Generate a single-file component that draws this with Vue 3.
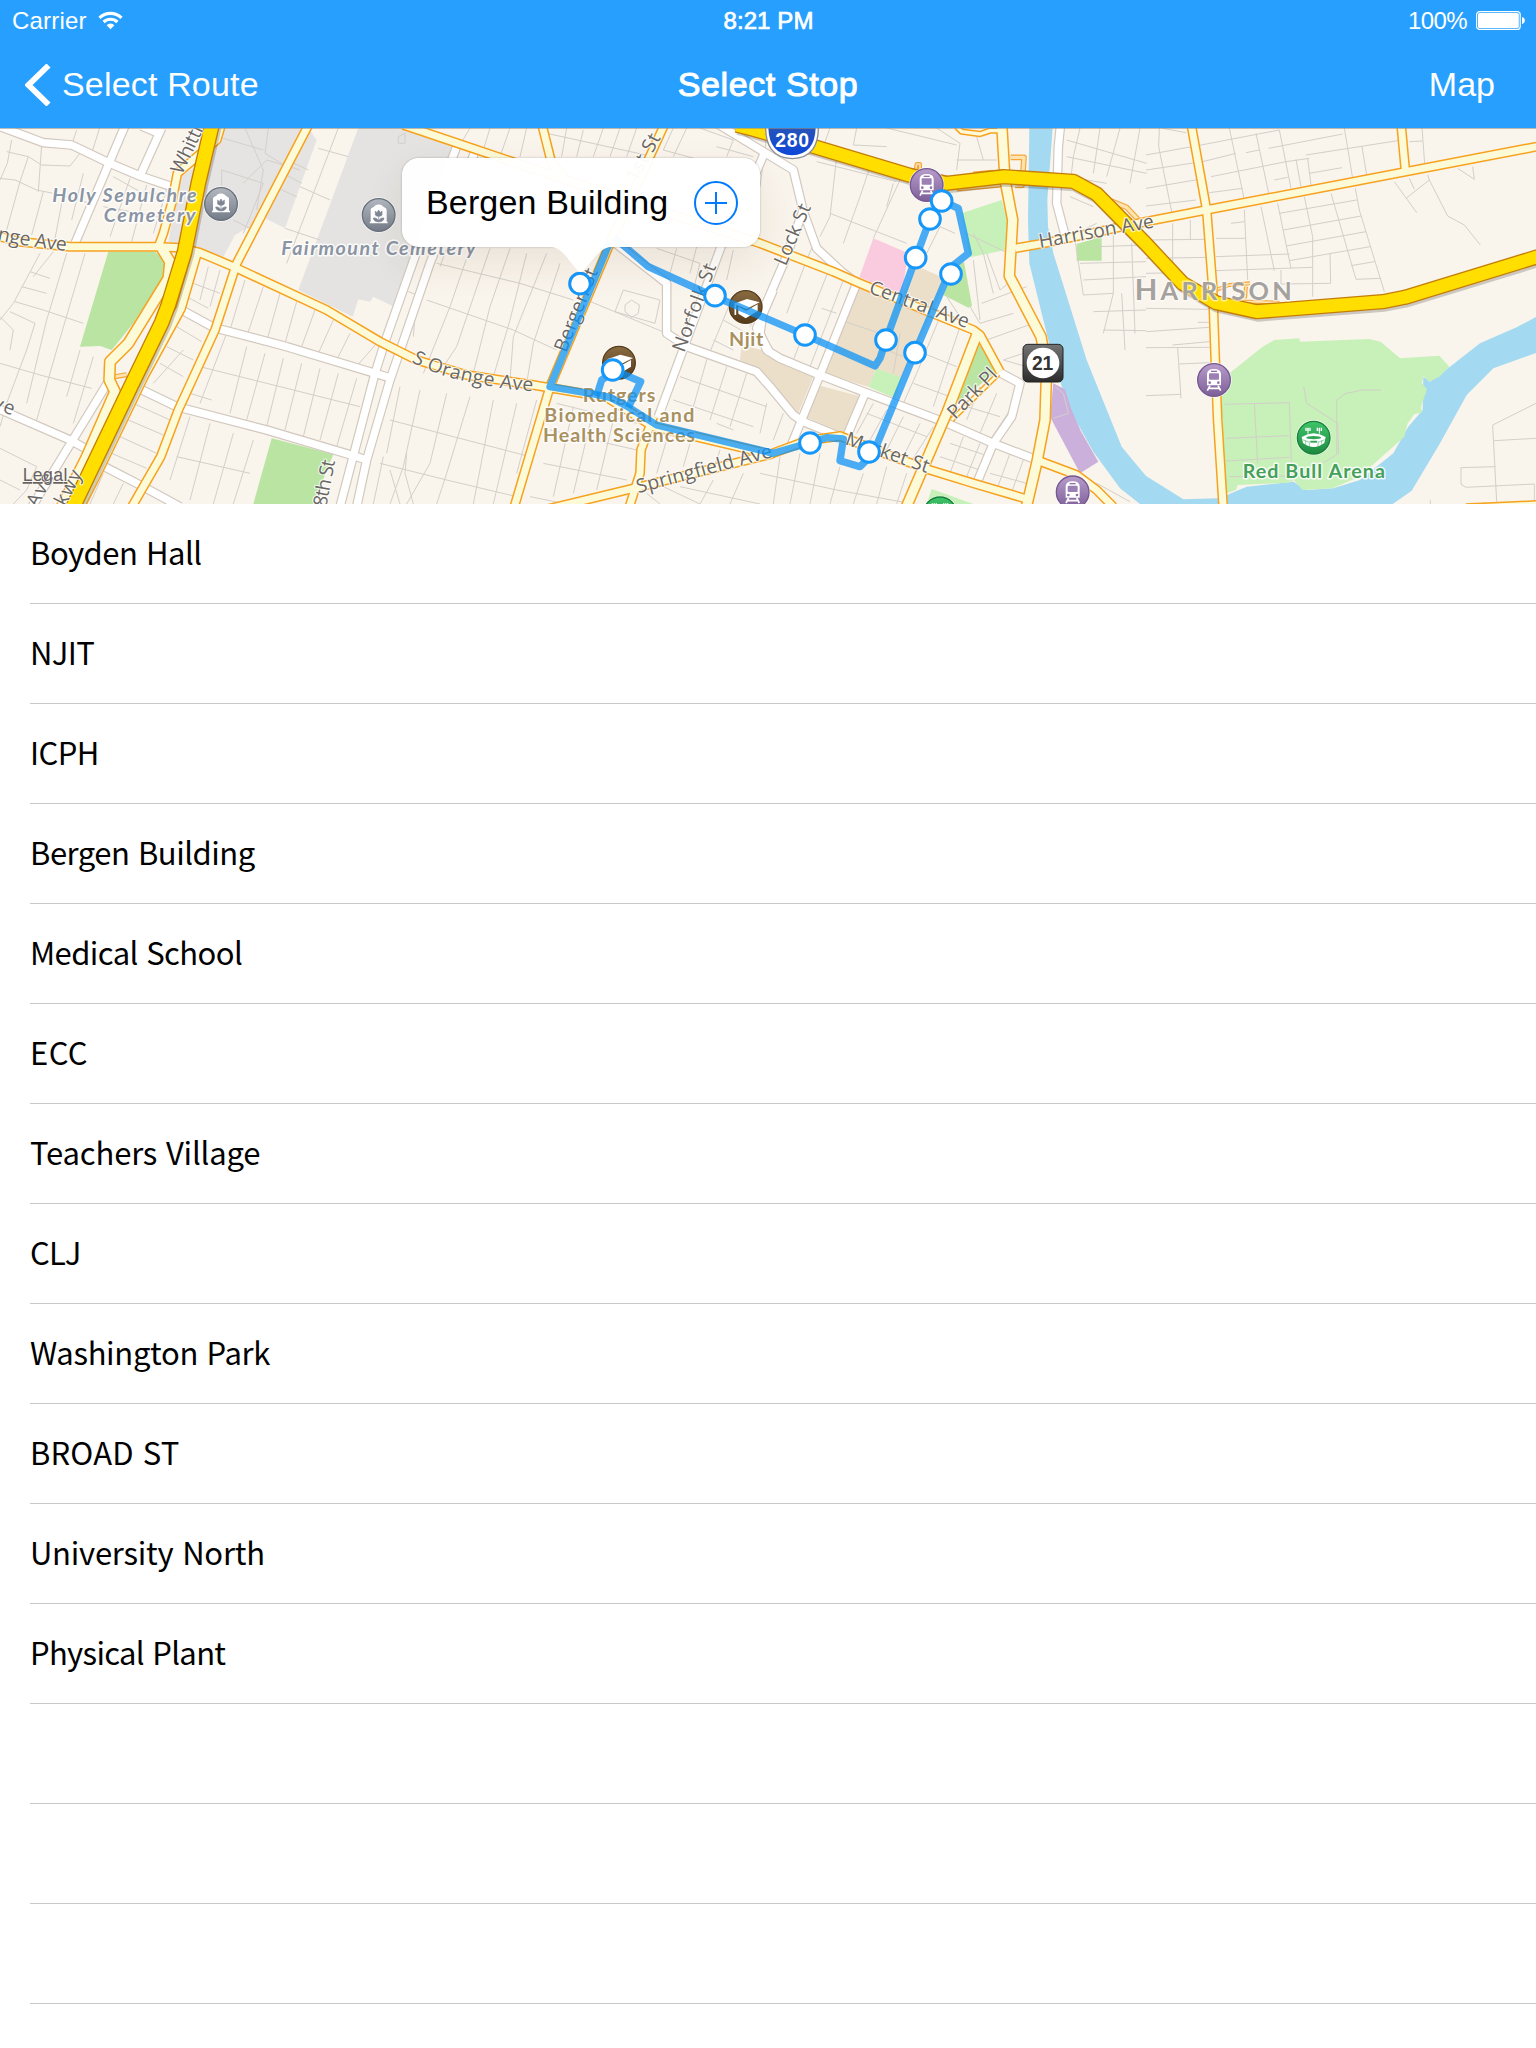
<script setup>
// Each stop carries its own letter tracking in px.
const stops = [
  ['Boyden Hall', -0.48], ['NJIT', -0.6], ['ICPH', -0.6], ['Bergen Building', -0.48],
  ['Medical School', -0.57], ['ECC', 0.4], ['Teachers Village', -0.18], ['CLJ', -0.9],
  ['Washington Park', -0.33], ['BROAD ST', 0.15], ['University North', -0.23],
  ['Physical Plant', -0.67], ['', 0], ['', 0], ['', 0],
]

// Map geometry is stored in device units (3 per pixel), grouped by map section.
const A = 0
const B = 1140
const C = 2280
const D = 3438
const shift = (dx, pts) =>
  pts.trim().split(/\s+/).map((p) => {
    const [x, y] = p.split(',').map(Number)
    return `${x + dx},${y}`
  }).join(' ')
const many = (rows) => rows.map(([dx, pts, w]) => ({ pts: shift(dx, pts), w: w || 0 }))

const areas = [
  [A, '665,24 925,24 950,60 855,325 795,295 705,345 665,420 575,390 505,365 540,170 620,120', '#e6e4e2'],
  [A, '1075,24 1240,24 1370,70 1182,560 1120,530 1110,545 1075,538 1058,590 895,510', '#e4e3e1'],
  [A, '325,395 465,395 497,420 497,457 400,610 335,690 300,678 240,680', '#b9e4a2'],
  [A, '815,955 1000,1003 940,1152 760,1152', '#b9e4a2'],
  [C, '605,280 725,240 742,300 735,390 630,412', '#c8f0b9'],
  [C, '575,450 612,425 636,558 625,563 550,525', '#b9e4a2'],
  [C, '655,670 715,750 590,850', '#b9e4a2'],
  [C, '950,372 1025,350 1025,422 950,422', '#b9e4a2'],
  [C, '515,1107 640,1152 500,1152', '#c8f0b9'],
  [C, '340,355 445,400 425,522 298,472', '#facade'],
  [C, '470,438 560,478 425,775 350,745 325,800 190,760 300,500 425,530', '#ebdfc9'],
  [C, '350,745 425,773 405,835 325,800', '#c8f0b9'],
  [C, '-55,675 5,690 160,770 110,890 0,765 -60,720', '#ebdfc9'],
  [C, '172,795 305,830 255,942 135,890', '#ebdfc9'],
  [C, '808,24 878,24 862,240 864,320 880,400 980,720 1085,980 1158,1068 1270,1138 1378,1135 1460,1100 1600,1085 1640,1110 1720,1105 1800,1080 1900,1000 1945,920 1988,870 1990,770 2010,785 2070,740 2160,670 2270,622 2330,590 2330,698 2200,745 2120,825 2040,970 1955,1112 1898,1152 1140,1152 1080,1105 1000,995 930,870 885,740 850,600 808,430 804,300', '#a3d9f1'],
  [C, '880,790 915,808 935,870 962,932 1015,1025 960,1060 870,890', '#ccb0dc'],
  [D, '225,780 350,680 385,660 460,655 462,665 670,657 705,666 762,715 880,707 910,740 880,770 850,785 832,768 828,790 843,808 825,860 828,878 805,882 785,910 775,950 640,1070 560,1105 470,1110 440,1078 430,1088 275,1095 270,1110 235,1122', '#c8f0b9'],
].map(([dx, pts, fill]) => ({ pts: shift(dx, pts), fill }))

const alleys = many([
  [A, '20,95 85,110 125,135 210,138 240,100'], [A, '35,60 22,130 0,180'], [A, '0,175 45,180 110,210 185,225 270,250'],
  [A, '85,110 60,185'], [A, '125,75 115,215'], [A, '230,30 210,90'], [A, '300,20 275,100'], [A, '60,185 20,330'],
  [A, '130,215 95,345'], [A, '190,225 165,355'], [A, '250,160 215,300'], [A, '340,170 420,215 500,225'],
  [A, '390,175 330,350'], [A, '440,195 395,365'], [A, '500,210 460,340'], [A, '310,260 475,290'],
  [A, '90,455 150,475'], [A, '65,500 140,520'], [A, '120,400 40,550 0,600'], [A, '200,400 140,600 80,850'],
  [A, '255,400 170,690 110,900'], [A, '160,395 100,470'], [A, '45,545 130,570 250,610'], [A, '30,575 105,610 80,690 20,850'],
  [A, '0,590 40,630 30,690'], [A, '0,730 120,765 275,805'], [A, '240,690 200,830'], [A, '280,710 220,910'],
  [A, '20,850 0,920'], [A, '80,1110 40,1152'], [A, '0,985 110,1040 80,1110'], [A, '0,1080 60,1110'],
  [A, '665,150 790,190 730,340'], [A, '670,55 790,90'], [A, '735,24 790,150 770,270'], [A, '730,190 800,120 900,150'],
  [A, '665,150 665,250'], [A, '700,300 760,330'], [A, '860,120 925,150'], [A, '850,160 905,190'], [A, '835,205 890,230'],
  [A, '805,24 795,100 860,140'], [A, '955,85 1045,110'], [A, '900,200 990,240'], [A, '855,325 960,360'], [A, '1015,24 965,155 860,430'],
  [A, '560,530 625,565'], [A, '580,490 660,520'], [A, '625,440 600,540'], [A, '660,450 630,560'],
  [A, '735,480 690,630'], [A, '790,500 740,650'], [A, '840,520 800,665'], [A, '890,545 855,670'], [A, '945,570 905,680'],
  [A, '1000,600 955,700'], [A, '1050,640 1010,720'], [A, '1130,670 1060,750'], [A, '530,620 605,665'], [A, '500,680 580,720'],
  [A, '480,730 550,770'], [A, '550,690 460,790'], [A, '600,740 800,790 1080,860'], [A, '570,820 635,840'], [A, '680,640 600,850'],
  [A, '740,680 690,880'], [A, '795,700 740,900'], [A, '850,715 800,920'], [A, '905,730 855,930'], [A, '960,745 910,950'],
  [A, '1015,760 960,960'], [A, '1070,775 1010,980'], [A, '400,850 510,900'], [A, '385,900 490,945'], [A, '360,950 470,1000'],
  [A, '335,1000 440,1045'], [A, '570,890 510,1080'], [A, '630,910 570,1140'], [A, '700,940 640,1152'], [A, '760,960 700,1152'],
  [A, '530,1010 750,1060'], [A, '310,1060 270,1152'], [A, '370,1090 340,1152'], [A, '1150,1010 1120,1152'],
  [B, '55,50 75,40 75,70 55,70 55,50'], [B, '270,24 240,75'], [B, '330,24 310,90'], [B, '390,24 360,110'], [B, '440,24 420,110'],
  [B, '560,24 545,110'], [B, '610,30 590,110'], [B, '670,24 640,110'], [B, '720,24 690,110'], [B, '770,24 740,110'], [B, '500,40 820,110'],
  [B, '880,24 850,90 960,120'], [B, '920,24 880,110'], [B, '960,24 1060,60 1040,110'], [B, '1010,80 1120,110'],
  [B, '270,385 210,560 130,760'], [B, '330,385 230,680 190,740'], [B, '390,385 330,560 280,760'], [B, '440,400 390,600 340,770'],
  [B, '500,400 400,650 390,780'], [B, '540,430 460,670 440,790'], [B, '170,430 420,490 580,540'], [B, '140,540 400,630 530,690'],
  [B, '85,515 110,525 100,650'], [B, '200,385 180,440'], [B, '620,540 860,640'], [B, '560,700 620,540'],
  [B, '730,510 840,540 825,610 705,575 730,510'], [B, '735,555 755,540 778,555 775,580 755,592 735,575 735,555'],
  [B, '830,385 960,430 940,510'], [B, '890,385 870,460'], [B, '950,380 930,460'], [B, '1060,390 1040,480'],
  [B, '1050,550 980,720'], [B, '1030,600 1100,640'], [B, '1000,660 1060,690'], [B, '1140,560 1110,620'],
  [B, '980,720 940,860'], [B, '1040,740 990,900'], [B, '1100,760 1050,920'], [B, '900,770 1160,860'], [B, '880,840 1120,920'],
  [B, '60,800 20,1000'], [B, '120,810 70,1040 30,1152'], [B, '200,820 150,1030 80,1152'], [B, '270,830 200,1060 170,1152'],
  [B, '340,840 280,1152'], [B, '410,850 340,1152'], [B, '470,840 410,1060'], [B, '30,900 220,950 450,1010'],
  [B, '0,1030 200,1080 410,1130'], [B, '30,1050 60,1152'], [B, '80,1000 75,1060 100,1152'], [B, '530,850 770,910'], [B, '510,930 770,990'],
  [B, '490,1030 740,1080'], [B, '580,860 520,1130'], [B, '640,870 580,1120'], [B, '700,900 650,1110'], [B, '450,1130 560,1152'],
  [B, '860,960 830,1060'], [B, '930,970 910,1040'], [B, '1010,910 1060,930'], [B, '1020,990 1000,1050'], [B, '900,1100 1140,1152'],
  [B, '850,1100 960,1152'], [B, '1000,1080 960,1152'], [B, '1090,1060 1050,1152'], [B, '800,1120 840,1152'],
  [C, '210,24 190,80 300,110'], [C, '290,24 280,75 380,80'], [C, '170,125 410,185'], [C, '230,110 210,290 180,350'],
  [C, '330,140 300,230 250,370'], [C, '420,180 340,355'], [C, '210,280 440,370'], [C, '530,24 600,70 590,150'],
  [C, '380,24 590,75'], [C, '650,50 670,120'], [C, '590,120 710,120'], [C, '400,190 380,260'], [C, '170,350 140,420 80,580'],
  [C, '210,440 100,720'], [C, '250,480 150,740'], [C, '185,565 230,580'], [C, '20,50 0,200'],
  [C, '640,340 670,400 700,520'], [C, '680,400 720,510 745,490'], [C, '630,560 660,610 760,580'], [C, '665,550 800,500'],
  [C, '640,420 660,600'], [C, '680,660 820,610'], [C, '620,340 735,395'], [C, '560,530 600,590'],
  [C, '500,400 540,320 585,340'], [C, '540,590 470,760 430,850'], [C, '600,620 520,860'], [C, '490,700 590,740'], [C, '460,790 570,830'],
  [C, '420,640 400,760'], [C, '240,600 360,640'], [C, '380,690 430,710'], [C, '340,850 290,940'], [C, '380,870 330,960'],
  [C, '430,890 380,990'], [C, '480,910 420,1030'], [C, '520,920 450,1030'], [C, '320,880 500,950'], [C, '620,860 720,890'],
  [C, '660,800 620,900'], [C, '710,820 660,940'], [C, '750,870 690,960'], [C, '570,970 690,1010'], [C, '540,1010 660,1050'],
  [C, '610,950 570,1060'], [C, '660,970 620,1070'], [C, '750,1000 710,1110'], [C, '790,1020 750,1130'], [C, '690,1060 800,1090'],
  [C, '0,1060 230,1110 460,1152'], [C, '60,1010 40,1152'], [C, '120,1000 90,1152'], [C, '180,1000 150,1152'], [C, '240,1040 210,1152'],
  [C, '310,1060 280,1152'], [C, '380,1040 350,1152'], [C, '440,1060 410,1152'], [C, '20,850 0,940'], [C, '70,880 40,960'],
  [C, '790,700 730,720 800,740'], [C, '885,800 910,820 925,880 880,895'],
  [C, '920,60 1160,130'], [C, '920,110 1160,160'], [C, '960,24 940,110 930,200'], [C, '1020,24 1000,160'], [C, '1080,24 1040,170'],
  [C, '1140,24 1110,190'], [C, '920,170 1040,190'], [C, '930,230 1000,260'], [C, '930,350 1010,310'], [C, '945,360 970,525 1060,520'],
  [C, '1060,340 1060,520 1030,640'], [C, '1115,370 1125,640'], [C, '1010,380 1158,375'], [C, '960,430 1158,425'], [C, '970,480 1158,470'],
  [C, '1000,575 1158,570'], [C, '1030,630 1158,632'], [C, '960,1152 1010,1090 1110,1145'], [C, '1085,520 1095,690'],
  [D, '0,105 165,75 400,30'], [D, '0,150 170,125 270,100'], [D, '0,205 160,178'], [D, '0,258 150,240'], [D, '40,24 38,80 80,290'],
  [D, '50,25 120,38'], [D, '195,170 420,125 490,115'], [D, '190,218 290,205'], [D, '250,24 295,240'], [D, '330,40 368,220'],
  [D, '400,30 435,205'], [D, '450,118 465,200'], [D, '485,115 495,195'], [D, '300,98 340,90'], [D, '368,85 590,42'], [D, '490,160 588,143'],
  [D, '385,180 425,172'], [D, '595,24 620,175'], [D, '480,105 755,62'], [D, '648,80 662,165'], [D, '828,24 836,130'], [D, '790,65 830,63'],
  [D, '745,185 812,278'], [D, '780,235 850,180 845,165'], [D, '850,180 905,288 955,315 1003,375'], [D, '790,175 805,208'],
  [D, '935,145 985,178 980,140'], [D, '345,260 385,452'], [D, '395,250 435,445'], [D, '475,230 500,350 500,530'],
  [D, '555,220 630,478 705,475'], [D, '628,205 640,270 715,515'], [D, '400,280 632,240'], [D, '412,330 645,288'], [D, '420,378 660,335'],
  [D, '430,422 672,380'], [D, '615,437 685,425'], [D, '255,310 295,305'], [D, '295,270 305,480'], [D, '210,355 298,355'],
  [D, '210,410 430,402'], [D, '210,452 500,442'], [D, '552,400 554,490 405,492 405,450'], [D, '80,310 80,440'], [D, '0,360 180,358'],
  [D, '133,300 133,360'], [D, '0,415 190,412'], [D, '0,460 100,458'], [D, '0,635 190,622'], [D, '0,565 190,568'], [D, '0,683 190,682'],
  [D, '80,675 190,665'], [D, '95,683 105,835'], [D, '100,732 190,728'], [D, '0,827 105,823'], [D, '155,607 190,607'],
  [D, '235,853 430,848 438,1085'], [D, '325,850 335,1030'], [D, '240,955 430,947'], [D, '240,1023 430,1012'], [D, '250,1070 435,1068'],
  [D, '473,800 482,850 575,910 578,1000 530,1030'], [D, '705,810 650,810 600,820 572,840 572,1000'],
  [D, '1170,850 1040,915 1052,1145'], [D, '1045,962 1170,955'], [D, '1048,1040 945,1043 945,1093 960,1102 1165,1092 1165,1140'], [D, '853,1140 853,1152'],
])

const whiteRoads = many([
  [A, '-20,12 130,68 215,75 330,130 420,168 530,205'],
  [A, '378,10 225,370'], [A, '485,24 420,168'], [A, '425,18 482,42'],
  [A, '545,570 640,622 860,680 1125,760 1175,775'],
  [A, '405,800 530,860 800,930 1060,1007 1100,1020'],
  [A, '290,1028 420,1095 540,1160'],
  [A, '-20,860 210,960 265,990'], [A, '325,785 90,1170'],
  [A, '1372,75 1250,395 1155,665 1125,760 1020,1160'],
  [A, '1425,95 1290,430 1170,780 1100,1020 1070,1160'],
  [B, '700,365 860,490 860,640 920,680 1130,755 1170,800 1240,885 1270,905 1380,950'],
  [B, '1025,375 835,890'], [B, '1010,10 1150,95 1240,150 1270,275 1310,385 1385,455 1430,490'],
  [B, '1155,95 1110,200'],
  [C, '130,270 75,420 10,570 0,640 20,690 60,715 180,765 310,815 550,905 700,970 830,1020'],
  [B, '1180,510 1130,625 1170,700'],
  [C, '290,490 180,765 90,985'], [C, '315,820 262,945'],
  [C, '715,755 780,790 755,890 700,970 650,1090'],
  [C, '902,10 895,80 890,250 915,345'],
])

const yellowRoads = many([
  [A, '-20,345 60,365 210,380 470,380 540,383 600,398 700,440 980,570 1140,665 1250,720 1400,765 1600,795 1820,832 1960,920 2310,1003 2420,962 2520,948 2660,1003 2790,1050 2920,1090 3090,1140'],
  [A, '665,10 650,60 532,160 515,250 490,340 475,380'],
  [A, '928,10 710,430 645,630 535,870 482,1010 390,1170'],
  [A, '485,385 510,425 505,475 385,670 330,725 328,780 345,815 260,1010 185,1160', 28],
  [A, '590,400 542,565 430,770 300,1040 235,1170', 24],
  [B, '70,15 560,180 1140,370 1360,455 1440,490 1780,630 1800,645 1860,755'],
  [B, '485,10 515,130 560,180'], [B, '855,10 690,370 510,800 400,1170'],
  [B, '820,890 783,990 780,1060 745,1170'], [B, '500,1168 760,1105 1170,1003'],
  [C, '652,640 560,880 435,1170', 27],
  [C, '715,762 575,900', 8],
  [C, '725,10 735,180 758,300 748,468 843,650 860,740 855,900 830,1030 797,1170', 27],
  [C, '590,20 605,35 660,42 690,32 725,32', 10],
  [C, '765,385 850,370 1158,305 1338,270 1938,155 2340,78'],
  [D, '135,10 182,270 200,500 207,700 215,900 232,1170', 21],
  [D, '765,10 778,150'],
  [C, '830,1020 950,1065 1010,1110 1060,1160'], [D, '960,1165 1200,1154'],
])

const ramps = many([
  [C, '752,112 792,112 786,196 765,196', 10], [C, '590,208 725,196', 6], [C, '960,205 1100,262 1140,305', 10],
  [C, '465,160 470,132 480,132 480,160', 5], [A, '345,770 380,764', 8], [D, '215,508 250,495 312,490', 5], [D, '230,545 310,545 400,548', 5],
  [D, '300,500 297,535', 5], [C, '640,160 700,155', 4],
])

const highways = many([
  [A, '637,10 595,190 554,395 505,555 485,608 392,800 215,1170', 40],
  [C, '-70,15 -20,28 170,82 450,166 560,190 730,170 940,184 1010,222 1158,372 1268,490 1368,548 1490,575 1868,545 1935,532 2340,408', 38],
])

const route = shift(B, '700,352 735,380 805,440 970,515 1170,600 1275,645 1485,738 1500,715 1518,660 1607,415 1650,297 1685,242 1735,265 1765,400 1715,440 1605,697 1480,1000 1440,1040 1380,1022 1390,957 1340,953 1290,968 1180,1000 830,915 740,858 690,832 640,822 510,800 690,365')
const routeLoop = shift(B, '650,828 665,780 705,752 782,785 745,862')
const markers = [
  [B + 600, 491], [B + 1005, 527], [B + 698, 750], [C + 135, 645], [C + 378, 660], [C + 467, 413], [C + 510, 297],
  [C + 545, 243], [C + 573, 462], [C + 465, 698], [C + 150, 969], [C + 327, 996],
]
const stations = [[C + 500, 195], [C + 938, 1117], [D + 204, 780]]
const cemeteries = [[663, 252], [1136, 285]]
const schools = [[B + 1097, 561], [B + 717, 728]]

const streetLabels = [
  { id: 'whit', d: 'M546,166 L640,-34', t: 'Whittier', w: 206 },
  { id: 'orange', d: 'M-150,326 Q40,378 210,394', t: 'S Orange Ave', w: 355 },
  { id: 'oave', d: 'M1234,725 Q1300,765 1420,789 T1620,814', t: 'S Orange Ave', w: 378 },
  { id: 'ave1', d: 'M-62,850 L46,890', t: 'Ave', w: 105 },
  { id: 'ave2', d: 'M112,1165 L165,1062', t: 'Ave', w: 108 },
  { id: 'pkwy', d: 'M178,1195 L250,1056', t: 'Pkwy', w: 150 },
  { id: 'eighth', d: 'M973,1192 L1006,1018', t: '18th St', w: 172 },
  { id: 'first', d: 'M1910,190 L1985,50', t: '1st St', w: 155 },
  { id: 'bergen', d: 'M1698,700 L1796,450', t: 'Bergen St', w: 264 },
  { id: 'norfolk', d: 'M2053,700 L2150,436', t: 'Norfolk St', w: 278 },
  { id: 'spring', d: 'M1915,1120 L2322,1010', t: 'Springfield Ave', w: 419 },
  { id: 'lock', d: 'M2357,440 L2435,258', t: 'Lock St', w: 194 },
  { id: 'central', d: 'M2604,518 L2903,626', t: 'Central Ave', w: 314 },
  { id: 'market', d: 'M2533,973 L2784,1060', t: 'Market St', w: 262 },
  { id: 'park', d: 'M2866,900 L2998,764', t: 'Park Pl', w: 186 },
  { id: 'harrison', d: 'M3120,384 L3468,321', t: 'Harrison Ave', w: 350 },
]
</script>

<template>
  <div class="screen">
    <header class="header">
      <div class="status">
        <div class="carrier">
          <span class="carrier-name">Carrier</span>
          <svg class="wifi" viewBox="0 0 26 19">
            <g fill="none" stroke="#fff" stroke-width="3.2">
              <path d="M1.5 6.8a16 16 0 0 1 22 0" />
              <path d="M5.6 11a10 10 0 0 1 13.8 0" />
            </g>
            <path d="M8.6 14.2a5.6 5.6 0 0 1 7.8 0L12.5 18.3z" fill="#fff" />
          </svg>
        </div>
        <div class="clock">8:21 PM</div>
        <div class="power">
          <span class="percent">100%</span>
          <svg class="battery" viewBox="0 0 49 19">
            <rect x=".6" y=".6" width="43.6" height="17.8" rx="3" fill="none" stroke="#fff" stroke-width="1.2" />
            <rect x="2" y="2" width="40.8" height="15" rx="1.6" fill="#fff" />
            <path d="M46 6c3.8.6 3.8 6.400 0 7z" fill="#fff" />
          </svg>
        </div>
      </div>
      <nav class="bar">
        <div class="back">
          <svg class="chevron" viewBox="0 0 26 42">
            <path d="M23.500 1.500L3.500 21l20 19.500" fill="none" stroke="#fff" stroke-width="5.800" />
          </svg>
          <span class="back-label">Select Route</span>
        </div>
        <h1 class="title">Select Stop</h1>
        <span class="action">Map</span>
      </nav>
    </header>

    <section class="map">
      <svg class="map-canvas" viewBox="0 24 4608 1128">
        <defs>
          <linearGradient id="gPurple" x1="0" y1="0" x2="0" y2="1"><stop offset="0" stop-color="#b79ccb" /><stop offset="1" stop-color="#7d5f98" /></linearGradient>
          <linearGradient id="gGrey" x1="0" y1="0" x2="0" y2="1"><stop offset="0" stop-color="#b3b8c0" /><stop offset="1" stop-color="#747c88" /></linearGradient>
          <linearGradient id="gBrown" x1="0" y1="0" x2="0" y2="1"><stop offset="0" stop-color="#8a6c42" /><stop offset="1" stop-color="#54391a" /></linearGradient>
          <linearGradient id="gGreen" x1="0" y1="0" x2="0" y2="1"><stop offset="0" stop-color="#3fc469" /><stop offset="1" stop-color="#1d8a41" /></linearGradient>
          <linearGradient id="gBlue" x1="0" y1="0" x2="0" y2="1"><stop offset="0" stop-color="#2a56b4" /><stop offset="1" stop-color="#0d47d8" /></linearGradient>
          <linearGradient id="gDark" x1="0" y1="0" x2="0" y2="1"><stop offset="0" stop-color="#747474" /><stop offset="1" stop-color="#2c2c2c" /></linearGradient>
          <path v-for="l in streetLabels" :id="l.id" :key="l.id" :d="l.d" />
        </defs>

        <rect x="0" y="24" width="4608" height="1128" fill="#f9f4ec" />
        <polygon v-for="(a, i) in areas" :key="'a' + i" :points="a.pts" :fill="a.fill" />

        <g fill="none" stroke-linejoin="round">
          <polyline v-for="(r, i) in alleys" :key="'s' + i" :points="r.pts" stroke="#d3cfc9" stroke-width="3" />
          <polyline v-for="(r, i) in whiteRoads" :key="'wc' + i" :points="r.pts" stroke="#d2c8be" stroke-width="29" />
          <polyline v-for="(r, i) in whiteRoads" :key="'wf' + i" :points="r.pts" stroke="#fff" stroke-width="22" />
          <polyline v-for="(r, i) in ramps" :key="'rc' + i" :points="r.pts" stroke="#f3a63a" :stroke-width="r.w + 7" />
          <polyline v-for="(r, i) in ramps" :key="'rf' + i" :points="r.pts" stroke="#fde3ae" :stroke-width="r.w" />
          <polyline v-for="(r, i) in yellowRoads" :key="'yc' + i" :points="r.pts" stroke="#f6a21e" :stroke-width="(r.w || 21) + 9" />
          <polyline v-for="(r, i) in yellowRoads" :key="'yf' + i" :points="r.pts" stroke="#fdfad8" :stroke-width="r.w || 21" />
          <polyline v-for="(r, i) in highways" :key="'hs' + i" :points="r.pts" stroke="#000" stroke-opacity=".18" :stroke-width="r.w + 8" transform="translate(5 7)" />
          <polyline v-for="(r, i) in highways" :key="'hc' + i" :points="r.pts" stroke="#c47d06" :stroke-width="r.w + 8" />
          <polyline v-for="(r, i) in highways" :key="'hf' + i" :points="r.pts" stroke="#ffde00" :stroke-width="r.w" />
        </g>

        <g class="street">
          <text v-for="l in streetLabels" :key="l.id"><textPath :href="'#' + l.id" :textLength="l.w">{{ l.t }}</textPath></text>
        </g>

        <g class="place">
          <g class="cem">
            <text x="157" y="246" textLength="433">Holy Sepulchre</text>
            <text x="311" y="307" textLength="275">Cemetery</text>
            <text x="844" y="405" textLength="583">Fairmount Cemetery</text>
          </g>
          <g class="edu">
            <text x="2187" y="678" textLength="103">Njit</text>
            <text x="1748" y="845" textLength="218">Rutgers</text>
            <text x="1633" y="905" textLength="450">Biomedical and</text>
            <text x="1629" y="965" textLength="456">Health Sciences</text>
          </g>
          <text class="arena" x="3728" y="1073" textLength="427">Red Bull Arena</text>
          <text class="city" x="3404" y="540" textLength="471"><tspan class="city-cap">H</tspan>ARRISON</text>
        </g>

        <g v-for="(p, i) in cemeteries" :key="'c' + i" :transform="`translate(${p[0]} ${p[1]})`">
          <circle r="53" fill="#fff" opacity=".8" />
          <circle r="49" fill="url(#gGrey)" stroke="#68717d" stroke-width="4" />
          <path d="M-27 25V20h3V-14c0-9 9-8 12-13 5-6 19-6 24 0 3 5 12 4 12 13V20h3v5z" fill="#fff" />
          <path d="M0 22V2M-16 9c1 9 8 12 16 11 8 1 15-2 16-11-7-1-13 2-16 9-3-7-9-10-16-9zM-10-12l5 5 5-8 5 8 5-5v12c-4 5-16 5-20 0z" fill="#7f8793" stroke="#7f8793" stroke-width="2" />
        </g>
        <g v-for="(p, i) in schools" :key="'e' + i" :transform="`translate(${p[0]} ${p[1]})`">
          <circle r="53" fill="#fff" opacity=".7" />
          <circle r="49" fill="url(#gBrown)" stroke="#553c1c" stroke-width="4" />
          <path d="M-36-10L4-24 42-14 2 6z" fill="#fff" />
          <path d="M-22-1L2 11 36-8V12L0 34-22 20z" fill="#fff" />
          <path d="M-31-8V24" stroke="#fff" stroke-width="5" />
        </g>
        <g v-for="(p, i) in stations" :key="'t' + i" :transform="`translate(${p[0]} ${p[1]})`">
          <circle r="53" fill="#fff" opacity=".8" />
          <circle r="49" fill="url(#gPurple)" stroke="#74588f" stroke-width="4" />
          <path d="M-21-18q1-15 21-15t21 15V16H-21z" fill="#fff" />
          <rect x="-9" y="-28" width="18" height="4" fill="#8f73a8" />
          <rect x="-15" y="-20" width="30" height="19" rx="3" fill="#9c80b4" />
          <circle cx="-13" cy="8" r="4" fill="#8f73a8" />
          <circle cx="13" cy="8" r="4" fill="#8f73a8" />
          <path d="M-12 17l-8 15M12 17l8 15M-16 25h32" stroke="#fff" stroke-width="5" fill="none" />
        </g>
        <g v-for="(p, i) in [[3941, 953], [2820, 1180]]" :key="'g' + i" :transform="`translate(${p[0]} ${p[1]})`">
          <circle r="53" fill="#fff" opacity=".8" />
          <circle r="49" fill="url(#gGreen)" stroke="#188039" stroke-width="4" />
          <path d="M-36-2L-32 16Q0 40 32 16L36-2Q0-24-36-2z" fill="#fff" />
          <ellipse cy="0" rx="22" ry="5" fill="#2fa656" />
          <path d="M-33 6Q0 24 33 6M-24 8v14M-13 11v16M13 11v16M24 8v14" stroke="#2fa656" stroke-width="1.500" fill="none" />
          <rect x="-11" y="8" width="22" height="8" fill="#2fa656" stroke="#fff" stroke-width="2" />
          <path d="M-17-28v16M17-28v16" stroke="#fff" stroke-width="3" />
          <path d="M-25-25h16M9-25h16" stroke="#fff" stroke-width="10" stroke-dasharray="4 2" />
        </g>

        <g>
          <path d="M2296 10Q2292 112 2376 114Q2458 112 2454 10z" fill="#fff" stroke="#8d8d96" stroke-width="4" transform="translate(1 2)" />
          <path d="M2305 10Q2302 103 2376 106Q2450 103 2447 10z" fill="url(#gBlue)" />
          <text class="shield" x="2326" y="80" textLength="101">280</text>
          <rect x="3069" y="673" width="120" height="113" rx="14" fill="url(#gDark)" stroke="#222" stroke-width="3" />
          <ellipse cx="3129" cy="729" rx="49" ry="46" fill="#fff" />
          <text class="shield dark" x="3096" y="749" textLength="64">21</text>
        </g>

        <g fill="none" stroke="#0a92f7" stroke-width="22" stroke-linejoin="round" stroke-opacity=".74">
          <polyline :points="route" />
          <polyline :points="routeLoop" />
        </g>
        <circle v-for="(m, i) in markers" :key="'m' + i" :cx="m[0]" :cy="m[1]" r="31" fill="#fff" stroke="#1697fa" stroke-width="9" />

        <text class="legal" x="68" y="1083" textLength="134">Legal</text>
        <rect x="0" y="24" width="4608" height="3" fill="#8f8f88" opacity=".6" />
      </svg>

      <div class="callout">
        <span class="callout-text">Bergen Building</span>
        <svg class="add" viewBox="0 0 44 44">
          <circle cx="22" cy="22" r="21" fill="none" stroke="#007aff" stroke-width="2" />
          <path d="M22 11v22M11 22h22" stroke="#007aff" stroke-width="2" />
        </svg>
        <svg class="tail" viewBox="0 0 60 26">
          <path d="M0 0C12 1 17 13 26 23Q29.500 27 33 23C42 13 48 1 60 0z" fill="#fff" fill-opacity=".97" />
        </svg>
      </div>
    </section>

    <ul class="list">
      <li v-for="([name, tracking], i) in stops" :key="i" class="row" :style="{ letterSpacing: tracking + 'px' }">{{ name }}</li>
    </ul>
  </div>
</template>

<style>
body { margin: 0; background: #fff; }
</style>

<style scoped>
.screen { width: 1536px; height: 2048px; overflow: hidden; background: #fff; display: flex; flex-direction: column; font-family: "Liberation Sans", Arial, sans-serif; }
.header { height: 128px; flex: none; background: #269fff; color: #fff; display: flex; flex-direction: column; }
.status { height: 41px; display: grid; grid-template-columns: 1fr auto 1fr; align-items: center; padding: 0 11px 0 12px; font-size: 24px; line-height: 41px; }
.carrier { display: flex; align-items: center; gap: 11px; }
.carrier-name { letter-spacing: 0.2px; }
.wifi { width: 26px; height: 19px; }
.clock { -webkit-text-stroke: 0.7px #fff; letter-spacing: 0.1px; }
.power { display: flex; justify-content: flex-end; align-items: center; gap: 9px; }
.percent { letter-spacing: -0.6px; }
.battery { width: 49px; height: 19px; }
.bar { height: 87px; display: grid; grid-template-columns: 1fr auto 1fr; align-items: center; padding: 0 41px 0 25px; font-size: 34px; line-height: 87px; }
.back { display: flex; align-items: center; gap: 11px; }
.back-label { letter-spacing: 0.17px; }
.chevron { width: 26px; height: 42px; }
.title { margin: 0; font-size: 34px; font-weight: 400; -webkit-text-stroke: 1px #fff; letter-spacing: 0.6px; padding-left: 16px; }
.action { text-align: right; }

.map { position: relative; flex: none; height: 376px; overflow: hidden; }
.map-canvas { display: block; width: 1536px; height: 376px; }
.street { font-family: "Open Sans", sans-serif; font-size: 58px; fill: #6a6763; stroke: #fff; stroke-width: 7px; stroke-opacity: .75; paint-order: stroke; stroke-linejoin: round; }
.place { font-family: Lato, sans-serif; font-weight: 700; font-size: 59px; stroke: #fff; stroke-width: 9px; stroke-opacity: .85; paint-order: stroke; stroke-linejoin: round; }
.cem { fill: #8a94a3; font-style: italic; }
.edu { fill: #a8915f; }
.arena { fill: #44a05a; }
.city { fill: #a5a29d; font-size: 76px; font-weight: 700; stroke-opacity: .55; }
.city-cap { font-size: 88px; }
.shield { font-family: "Liberation Sans", Arial, sans-serif; font-weight: 700; font-size: 58px; fill: #fff; }
.shield.dark { fill: #333; }
.legal { font-size: 53px; fill: #66625e; text-decoration: underline; stroke: #fff; stroke-width: 3px; stroke-opacity: .6; paint-order: stroke; }

.callout { position: absolute; left: 402px; top: 30px; width: 358px; height: 89px; box-sizing: border-box; padding: 0 22px 0 24px; display: flex; align-items: center; justify-content: space-between; border-radius: 17px; background: rgba(255, 255, 255, .97); box-shadow: 0 0 2px rgba(0, 0, 0, .3), 0 16px 40px rgba(90, 60, 20, .09); }
.callout-text { font-size: 34px; color: #000; letter-spacing: 0.15px; }
.add { width: 44px; height: 44px; }
.tail { position: absolute; left: 149px; top: 89px; width: 60px; height: 26px; }

.list { list-style: none; margin: 0; padding: 0 0 0 30px; }
.row { height: 100px; box-sizing: border-box; border-bottom: 1px solid #c8c7cc; font-family: "Noto Sans CJK SC", "Noto Sans", sans-serif; font-size: 31px; line-height: 95px; color: #000; word-spacing: 2px; }
</style>
